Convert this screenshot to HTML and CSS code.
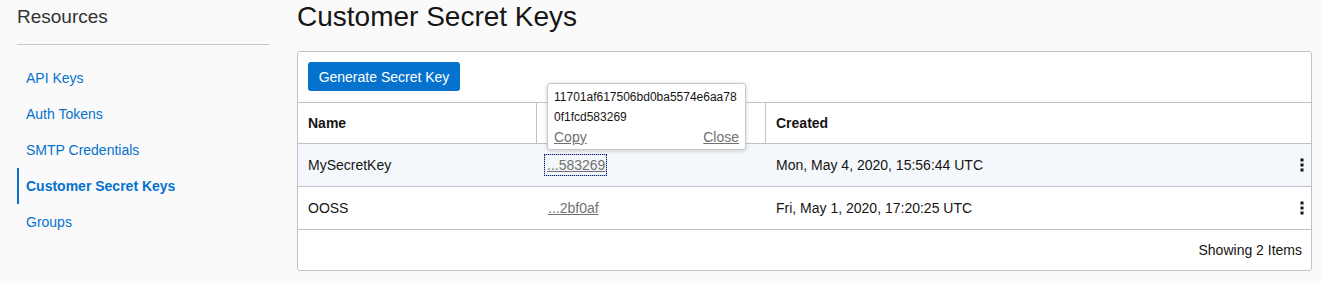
FILE: index.html
```html
<!DOCTYPE html>
<html lang="en">
<head>
<meta charset="utf-8">
<title>Customer Secret Keys</title>
<link rel="stylesheet" href="styles.css">
</head>
<body>
<div class="page">
  <aside class="sidebar">
    <h2 class="side-title">Resources</h2>
    <nav class="side-nav">
      <a class="side-link" href="#">API Keys</a>
      <a class="side-link" href="#">Auth Tokens</a>
      <a class="side-link" href="#">SMTP Credentials</a>
      <a class="side-link active" href="#">Customer Secret Keys</a>
      <a class="side-link" href="#">Groups</a>
    </nav>
  </aside>
  <main class="main">
    <h1 class="title">Customer Secret Keys</h1>
    <section class="panel">
      <div class="toolbar">
        <button class="btn-primary" type="button">Generate Secret Key</button>
      </div>
      <div class="row head">
        <div class="cell th sep">Name</div>
        <div class="cell th sep"></div>
        <div class="cell th">Created</div>
        <div class="cell th"></div>
      </div>
      <div class="row data hl">
        <div class="cell">MySecretKey</div>
        <div class="cell"><a class="key-link focused" href="#">...583269</a></div>
        <div class="cell">Mon, May 4, 2020, 15:56:44 UTC</div>
        <div class="cell kebab-cell">
          <svg class="kebab" width="4" height="14" viewBox="0 0 4 14"><rect x="0.5" y="0.5" width="3" height="3"/><rect x="0.5" y="5.5" width="3" height="3"/><rect x="0.5" y="10.5" width="3" height="3"/></svg>
        </div>
      </div>
      <div class="row data">
        <div class="cell">OOSS</div>
        <div class="cell"><a class="key-link" href="#">...2bf0af</a></div>
        <div class="cell">Fri, May 1, 2020, 17:20:25 UTC</div>
        <div class="cell kebab-cell">
          <svg class="kebab" width="4" height="14" viewBox="0 0 4 14"><rect x="0.5" y="0.5" width="3" height="3"/><rect x="0.5" y="5.5" width="3" height="3"/><rect x="0.5" y="10.5" width="3" height="3"/></svg>
        </div>
      </div>
      <div class="footer">Showing 2 Items</div>

      <div class="popover">
        <div class="pop-line">11701af617506bd0ba5574e6aa78</div>
        <div class="pop-line">0f1fcd583269</div>
        <div class="pop-actions">
          <a class="pop-link" href="#">Copy</a>
          <a class="pop-link" href="#">Close</a>
        </div>
      </div>
    </section>
  </main>
</div>
</body>
</html>
```
FILE: styles.css
```css
* { box-sizing: border-box; }

html, body {
  margin: 0;
  padding: 0;
  background: #fafafa;
  font-family: "Liberation Sans", Arial, Helvetica, sans-serif;
  color: #161513;
}

.page {
  display: flex;
  gap: 28px;
  padding: 0 11px 0 17px;
}

.sidebar {
  width: 252px;
  flex: none;
}

.side-title {
  margin: 0;
  font-size: 19px;
  font-weight: normal;
  line-height: 34px;
  color: #333;
  padding-bottom: 10px;
  border-bottom: 1px solid #c4c8cc;
}

.side-nav {
  display: flex;
  flex-direction: column;
  padding-top: 15px;
}

.side-link {
  display: block;
  height: 36px;
  line-height: 36px;
  padding-left: 7px;
  font-size: 14px;
  color: #0572ce;
  text-decoration: none;
  border-left: 2px solid transparent;
}

.side-link.active {
  font-weight: bold;
  border-left-color: #0572ce;
}

.main {
  flex: 1;
  min-width: 0;
}

.title {
  margin: 0 0 17px 0;
  font-size: 28px;
  font-weight: normal;
  line-height: 34px;
  color: #161513;
}

.panel {
  position: relative;
  background: #fff;
  border: 1px solid #bfc3c8;
  border-radius: 3px;
}

.toolbar {
  padding: 10px 10px 11px 10px;
  border-bottom: 1px solid #bfc3c8;
}

.btn-primary {
  display: block;
  height: 29px;
  width: 152px;
  padding: 0;
  border: none;
  border-radius: 3px;
  background: #0572ce;
  color: #fff;
  font-family: inherit;
  font-size: 14px;
}

.row {
  display: grid;
  grid-template-columns: 239px 229px 1fr 30px;
  border-bottom: 1px solid #bfc3c8;
}

.row.head { height: 41px; }
.row.data { height: 43px; }
.row.hl { background: #f4f7fb; }

.cell {
  display: flex;
  align-items: center;
  padding-left: 10px;
  font-size: 14px;
  color: #161513;
}

.th { font-weight: bold; }
.th.sep { border-right: 1px solid #bfc3c8; }

.kebab-cell {
  padding-left: 0;
  justify-content: flex-end;
  padding-right: 7px;
}

.kebab { fill: #161513; }

.key-link {
  color: #707070;
  text-decoration: underline;
  font-size: 14px;
  line-height: 20px;
  padding: 0 1px;
}

.key-link.focused {
  outline: 1px dotted #1b1b55;
  box-shadow: 0 0 0 1px #9dbdf2;
  margin-left: -2px;
  padding: 0 1px 0 2px;
}

.footer {
  height: 40px;
  display: flex;
  align-items: center;
  justify-content: flex-end;
  padding-right: 9px;
  font-size: 14px;
  color: #161513;
}

.popover {
  position: absolute;
  left: 249px;
  top: 31px;
  width: 199px;
  padding: 3px 6px 2px 6px;
  background: #fff;
  border: 1px solid #c4c8cc;
  border-radius: 3px;
  box-shadow: 0 1px 4px rgba(0, 0, 0, 0.18);
  font-size: 12px;
  line-height: 20px;
  color: #161513;
}

.pop-line { white-space: nowrap; }

.pop-actions {
  display: flex;
  justify-content: space-between;
}

.pop-link {
  color: #707070;
  text-decoration: underline;
  font-size: 14px;
}
```
